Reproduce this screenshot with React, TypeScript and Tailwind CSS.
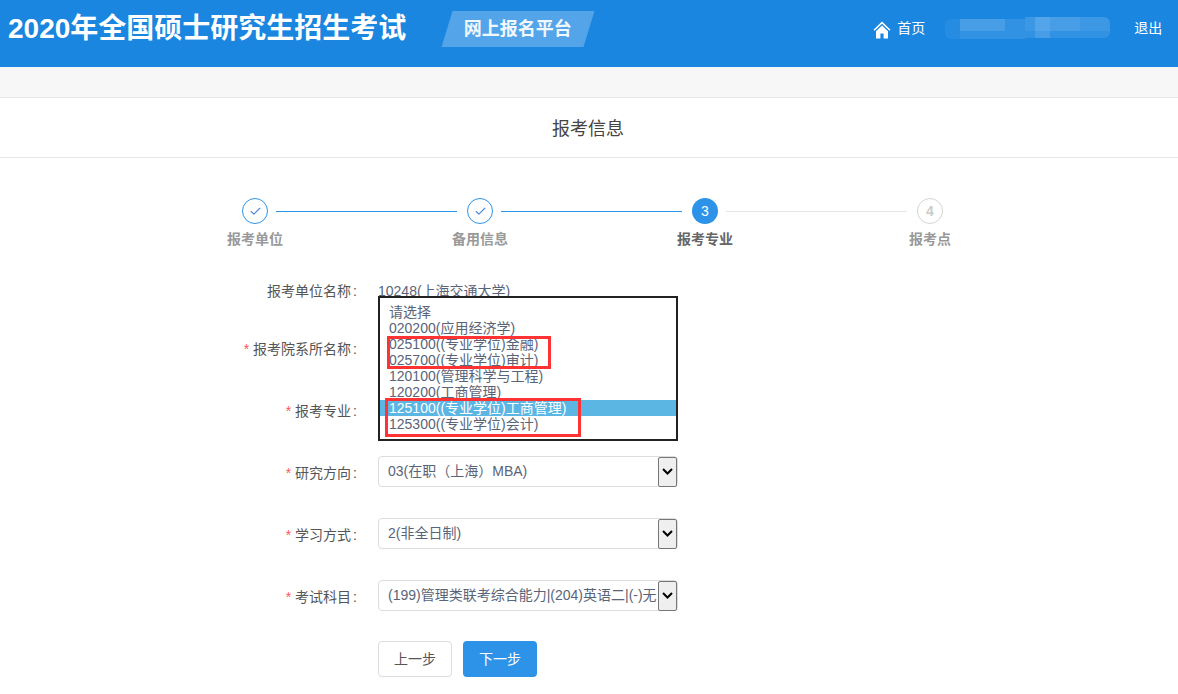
import { Check } from "lucide-react";

const font = '"Liberation Sans", "Noto Sans CJK SC", sans-serif';

const steps = [
  { label: "报考单位", state: "done" },
  { label: "备用信息", state: "done" },
  { label: "报考专业", state: "active" },
  { label: "报考点", state: "todo" },
];

const options = [
  "请选择",
  "020200(应用经济学)",
  "025100((专业学位)金融)",
  "025700((专业学位)审计)",
  "120100(管理科学与工程)",
  "120200(工商管理)",
  "125100((专业学位)工商管理)",
  "125300((专业学位)会计)",
];

const Arrow = () => (
  <div className="w-[19px] h-[30px] shrink-0 bg-[#efefef] border border-[#767676] rounded-[2px] flex items-center justify-center">
    <svg width="11" height="7" viewBox="0 0 11 7" fill="none">
      <path d="M1 1l4.5 4.5L10 1" stroke="#000" strokeWidth="2" />
    </svg>
  </div>
);

const Label = ({ text, required = true }: { text: string; required?: boolean }) => (
  <div className="w-[359px] shrink-0 pt-[4px] text-right text-[14px] text-[#555]">
    {required && <span className="text-[#f55] mr-[4px]">*</span>}
    {text}
    <span className="ml-[2px] mr-[2px]">:</span>
  </div>
);

const Select = ({ value }: { value: string }) => (
  <div className="ml-[19px] w-[300px] h-[31px] border border-[#ddd] rounded-[4px] bg-white flex items-center justify-between">
    <span className="pl-[9px] text-[14px] text-[#5a6478] whitespace-nowrap overflow-hidden">{value}</span>
    <Arrow />
  </div>
);

export default function App() {
  return (
    <div className="w-[1178px] h-[694px] overflow-hidden bg-white" style={{ fontFamily: font }}>
      <header className="h-[67px] bg-[#1a86e0] flex items-center text-white">
        <h1 className="ml-[8px] text-[28px] font-bold leading-none whitespace-nowrap -mt-[10px]">2020年全国硕士研究生招生考试</h1>
        <div className="ml-[41px] -mt-[9px] w-[142px] h-[36px] -skew-x-[17deg] bg-white/25 flex items-center justify-center">
          <span className="skew-x-[17deg] text-[18px] font-bold text-[#f0f7fd]">网上报名平台</span>
        </div>
        <svg className="ml-[284px] -mt-[7px]" width="18" height="18" viewBox="0 0 18 18" fill="#fff">
          <path d="M9 0.5L0.5 8.8l1 1L9 2.8l7.5 7 1-1z" />
          <path d="M9 4.6L3 10.2V17.5h4.4v-5h3.2v5H15v-7.3z" />
        </svg>
        <span className="ml-[6px] -mt-[11px] text-[14px]">首页</span>
        {/* mosaic over the candidate's name */}
        <div className="ml-[20px] -mt-[13px] w-[165px] h-[23px] flex items-start">
          <div className="w-[80px] mt-[3px] flex flex-col">
            <div className="h-[12px] flex">
              <div className="w-[15px] bg-white/5 rounded-tl-[6px]" />
              <div className="w-[45px] bg-white/20" />
              <div className="w-[20px] bg-white/10" />
            </div>
            <div className="h-[8px] flex">
              <div className="w-[15px] bg-white/5 rounded-bl-[6px]" />
              <div className="w-[65px] bg-white/10" />
            </div>
          </div>
          <div className="w-[85px] mt-[1px] flex flex-col">
            <div className="h-[14px] flex">
              <div className="w-[10px] bg-white/15" />
              <div className="w-[15px] bg-white/25" />
              <div className="w-[30px] bg-white/20" />
              <div className="w-[30px] bg-white/15 rounded-tr-[6px]" />
            </div>
            <div className="h-[7px] flex">
              <div className="w-[10px] bg-white/10" />
              <div className="w-[15px] bg-white/20" />
              <div className="w-[60px] bg-white/10 rounded-br-[6px]" />
            </div>
          </div>
        </div>
        <span className="ml-[24px] -mt-[11px] text-[14px]">退出</span>
      </header>

      <div className="h-[31px] bg-[#f7f7f7] border-b border-[#e7e7e7]" />

      <div className="h-[60px] pt-[4px] pr-[2px] border-b border-[#e7e7e7] flex items-center justify-center text-[18px] text-[#444]">
        报考信息
      </div>

      <div className="flex pl-[242px] pt-[40px]">
        {steps.map((step, i) => (
          <div key={step.label} className="w-[225px] shrink-0">
            <div className="flex items-center">
              {step.state === "done" && (
                <div className="w-[26px] h-[26px] shrink-0 rounded-full border border-[#2c93e8] flex items-center justify-center">
                  <Check size={13} strokeWidth={2} className="text-[#4a86d8]" />
                </div>
              )}
              {step.state === "active" && (
                <div className="w-[26px] h-[26px] shrink-0 rounded-full bg-[#2c93e8] text-white text-[14px] flex items-center justify-center">
                  3
                </div>
              )}
              {step.state === "todo" && (
                <div className="w-[26px] h-[26px] shrink-0 rounded-full border border-[#d5d5d5] text-[#ccc] text-[14px] font-bold flex items-center justify-center">
                  4
                </div>
              )}
              {i < 3 && (
                <div className={`ml-[8px] w-[181px] h-px ${step.state === "done" ? "bg-[#2c93e8]" : "bg-[#e5e5e5]"}`} />
              )}
            </div>
            <div
              className={`w-[26px] mt-[6px] flex justify-center whitespace-nowrap text-[14px] font-bold leading-[18px] ${
                step.state === "active" ? "text-[#666]" : "text-[#999]"
              }`}
            >
              {step.label}
            </div>
          </div>
        ))}
      </div>

      <div className="relative pt-[26px]">
        <div className="flex items-center h-[31px]">
          <Label text="报考单位名称" required={false} />
          <span className="ml-[19px] pt-[4px] text-[14px] text-[#5a6478]">10248(上海交通大学)</span>
        </div>

        <div className="flex items-center h-[31px] mt-[27px]">
          <Label text="报考院系所名称" />
        </div>
        <div className="flex items-center h-[31px] mt-[31px]">
          <Label text="报考专业" />
        </div>
        <div className="flex items-center h-[31px] mt-[31px]">
          <Label text="研究方向" />
          <Select value="03(在职（上海）MBA)" />
        </div>
        <div className="flex items-center h-[31px] mt-[31px]">
          <Label text="学习方式" />
          <Select value="2(非全日制)" />
        </div>
        <div className="flex items-center h-[31px] mt-[31px]">
          <Label text="考试科目" />
          <Select value="(199)管理类联考综合能力|(204)英语二|(-)无" />
        </div>

        <div className="flex gap-[11px] pl-[378px] mt-[30px]">
          <button className="w-[74px] h-[36px] rounded-[4px] border border-[#ddd] bg-white text-[14px] text-[#555]">上一步</button>
          <button className="w-[74px] h-[36px] rounded-[4px] bg-[#2c93e8] text-[14px] text-white">下一步</button>
        </div>

        {/* open listbox over the rows */}
        <div className="absolute left-[378px] top-[48px] w-[300px] h-[145px] border-2 border-[#222] bg-white pt-[6px]">
          {options.map((o, i) => (
            <div
              key={o}
              className={`h-[16px] pl-[9px] text-[14px] leading-[16px] whitespace-nowrap ${
                i === 6 ? "bg-[#5bb6e4] text-white" : "text-[#5a6478]"
              }`}
            >
              {o}
            </div>
          ))}
        </div>

        {/* red annotation boxes */}
        <div className="absolute left-[387px] top-[88px] w-[164px] h-[33px] border-[3px] border-[#ff3333]" />
        <div className="absolute left-[385px] top-[150px] w-[196px] h-[39px] border-[3px] border-[#ff3333]" />
      </div>
    </div>
  );
}
